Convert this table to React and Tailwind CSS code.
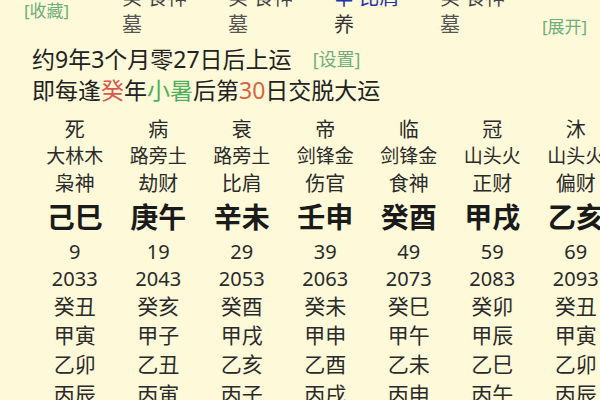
import React from "react";

const pillars = [
  { top: "癸 食神", bottom: "墓", topColor: "text-[#444]", bottomColor: "text-[#555]" },
  { top: "癸 食神", bottom: "墓", topColor: "text-[#444]", bottomColor: "text-[#555]" },
  { top: "辛 比肩", bottom: "养", topColor: "text-[#2233aa]", bottomColor: "text-[#333]" },
  { top: "癸 食神", bottom: "墓", topColor: "text-[#444]", bottomColor: "text-[#555]" },
];

const rows = [
  { cells: ["死", "病", "衰", "帝", "临", "冠", "沐"], cls: "h-[27px] leading-[27px] text-[20px]" },
  { cells: ["大林木", "路旁土", "路旁土", "剑锋金", "剑锋金", "山头火", "山头火"], cls: "h-[27px] leading-[27px] text-[19px]" },
  { cells: ["枭神", "劫财", "比肩", "伤官", "食神", "正财", "偏财"], cls: "h-[27px] leading-[27px] text-[20px]" },
  { cells: ["己巳", "庚午", "辛未", "壬申", "癸酉", "甲戌", "乙亥"], cls: "h-[41px] leading-[41px] text-[28px] font-bold text-[#1a1a1a]" },
  { cells: ["9", "19", "29", "39", "49", "59", "69"], cls: "h-[27px] leading-[27px] text-[20px]" },
  { cells: ["2033", "2043", "2053", "2063", "2073", "2083", "2093"], cls: "h-[27px] leading-[27px] text-[20px]" },
  { cells: ["癸丑", "癸亥", "癸酉", "癸未", "癸巳", "癸卯", "癸丑"], cls: "h-[29px] leading-[29px] text-[21px]" },
  { cells: ["甲寅", "甲子", "甲戌", "甲申", "甲午", "甲辰", "甲寅"], cls: "h-[29.5px] leading-[29.5px] text-[21px]" },
  { cells: ["乙卯", "乙丑", "乙亥", "乙酉", "乙未", "乙巳", "乙卯"], cls: "h-[29.5px] leading-[29.5px] text-[21px]" },
  { cells: ["丙辰", "丙寅", "丙子", "丙戌", "丙申", "丙午", "丙辰"], cls: "h-[29.5px] leading-[29.5px] text-[21px]" },
];

export default function App() {
  return (
    <div className="w-[600px] h-[400px] overflow-hidden bg-[#fdf9d9] text-[#2a2a2a] font-['Noto_Sans','Noto_Sans_CJK_SC',sans-serif]">
      {/* 顶部：四柱末行 */}
      <div className="flex items-start h-[40px]">
        <div className="w-[122px] pl-[24px] pt-[1px] text-[17px] leading-[20px] text-[#6fae7c]">
          [收藏]
        </div>
        {pillars.map((p, i) => (
          <div key={i} className={`-mt-[16px] text-[20px] leading-[27px] ${i === 3 ? "w-[102px]" : "w-[106px]"}`}>
            <div className={p.topColor}>{p.top}</div>
            <div className={p.bottomColor}>{p.bottom}</div>
          </div>
        ))}
        <div className="pt-[17px] text-[17px] leading-[20px] text-[#6fae7c]">[展开]</div>
      </div>

      {/* 起运说明 */}
      <div className="mt-[3.5px] pl-[32px] text-[23px] leading-[31px] text-[#222]">
        <div className="flex items-center">
          <span>约9年3个月零27日后上运</span>
          <span className="ml-[21px] text-[18px] text-[#6fae7c]">[设置]</span>
        </div>
        <div>
          即每逢<span className="text-[#d9584a]">癸</span>年
          <span className="text-[#4caf5a]">小暑</span>后第
          <span className="text-[#d5643e]">30</span>日交脱大运
        </div>
      </div>

      {/* 大运表 */}
      <div className="mt-[10px] pl-[33px]">
        {rows.map((r, i) => (
          <div key={i} className={`grid grid-cols-[repeat(7,83.5px)] whitespace-nowrap ${r.cls}`}>
            {r.cells.map((c, j) => (
              <div key={j} className="text-center">
                {c}
              </div>
            ))}
          </div>
        ))}
      </div>
    </div>
  );
}
